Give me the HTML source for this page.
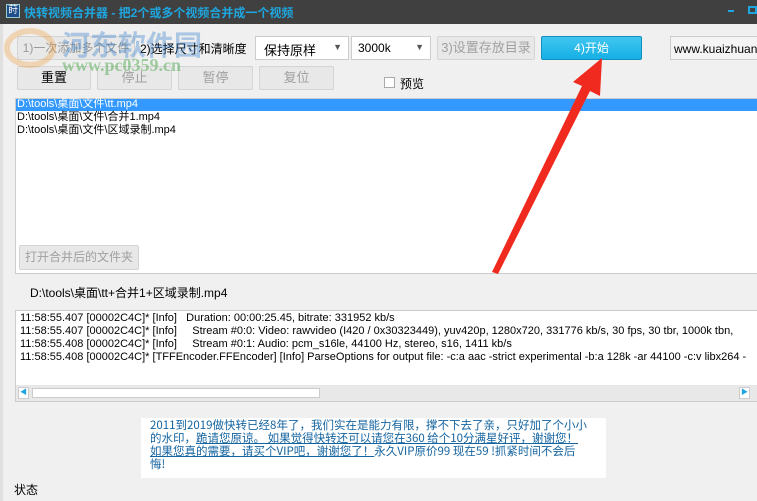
<!DOCTYPE html>
<html><head><meta charset="utf-8"><style>
*{margin:0;padding:0;box-sizing:border-box}
body{width:757px;height:501px;overflow:hidden;background:#f0f0f0;position:relative;font-family:"Liberation Sans","Noto Sans CJK SC",sans-serif;font-size:12px;color:#000}
.a{position:absolute}
.btn{position:absolute;border:1px solid #d4d4d4;background:#e8e8e8;color:#a0a0a0;font-size:13px;text-align:center;border-radius:2px}
.w{background:#fff}
</style></head><body>
<div class="a" style="left:0;top:0;width:757px;height:24px;background:#404040"></div>
<div class="a" style="left:6px;top:4px;width:14px;height:14px;background:#1e4f8a;border:1px solid #9cc;color:#fff;font-size:10px;line-height:12px;text-align:center">莳</div>
<div class="a" style="left:24px;top:4px;color:#1ea6df;font-weight:bold;font-size:12px">快转视频合并器 - 把2个或多个视频合并成一个视频</div>
<div class="a" style="left:728px;top:10px;width:6px;height:2px;background:#1ea6df"></div>
<div class="a" style="left:748px;top:6px;width:9px;height:8px;border:2px solid #1ea6df"></div>

<div class="btn" style="left:17px;top:36px;width:118px;height:24px;line-height:22px;color:#999;font-size:12px">1)一次添加多个文件</div>
<div class="a" style="left:140px;top:40px;font-size:12px">2)选择尺寸和清晰度</div>
<div class="a w" style="left:255px;top:36px;width:94px;height:24px;border:1px solid #ccc;font-size:13px;padding:3px 8px">保持原样<span style="position:absolute;right:6px;top:5px;font-size:9px;color:#555">▼</span></div>
<div class="a w" style="left:351px;top:36px;width:80px;height:24px;border:1px solid #ccc;font-size:12px;padding:4px 6px">3000k<span style="position:absolute;right:6px;top:5px;font-size:9px;color:#555">▼</span></div>
<div class="btn" style="left:437px;top:36px;width:98px;height:24px;line-height:22px">3)设置存放目录</div>
<div class="a" style="left:541px;top:36px;width:101px;height:24px;border:1px solid #1490c0;background:linear-gradient(#40c6ef,#16b0e6);color:#fff;text-align:center;line-height:22px;font-size:12px;border-radius:2px">4)开始</div>
<div class="a" style="left:670px;top:36px;width:90px;height:24px;border:1px solid #ccc;background:#f4f4f4;padding:5px 3px;font-size:12px;white-space:nowrap;overflow:hidden">www.kuaizhuan.c</div>

<div class="btn" style="left:17px;top:66px;width:74px;height:24px;line-height:22px;color:#000">重置</div>
<div class="btn" style="left:97px;top:66px;width:75px;height:24px;line-height:22px">停止</div>
<div class="btn" style="left:178px;top:66px;width:75px;height:24px;line-height:22px">暂停</div>
<div class="btn" style="left:259px;top:66px;width:75px;height:24px;line-height:22px">复位</div>
<div class="a w" style="left:384px;top:77px;width:11px;height:11px;border:1px solid #aaa"></div>
<div class="a" style="left:400px;top:75px;font-size:12px">预览</div>

<div class="a w" style="left:15px;top:98px;width:745px;height:176px;border:1px solid #ccc"></div>
<div class="a" style="left:16px;top:99px;width:741px;height:12px;background:#3399ff"></div>
<div class="a" style="left:17px;top:98px;line-height:13px;font-size:11px"><span style="color:#fff">D:\tools\桌面\文件\tt.mp4</span><br>D:\tools\桌面\文件\合并1.mp4<br>D:\tools\桌面\文件\区域录制.mp4</div>
<div class="btn" style="left:19px;top:245px;width:120px;height:25px;line-height:23px;font-size:12px">打开合并后的文件夹</div>
<div class="a" style="left:30px;top:284px;font-size:12px">D:\tools\桌面\tt+合并1+区域录制.mp4</div>

<div class="a w" style="left:15px;top:310px;width:745px;height:92px;border:1px solid #ccc"></div>
<div class="a" style="left:20px;top:312px;font-size:11px;line-height:13px;white-space:nowrap;width:735px;overflow:hidden">11:58:55.407 [00002C4C]* [Info]&nbsp;&nbsp; Duration: 00:00:25.45, bitrate: 331952 kb/s<br>11:58:55.407 [00002C4C]* [Info]&nbsp;&nbsp;&nbsp;&nbsp; Stream #0:0: Video: rawvideo (I420 / 0x30323449), yuv420p, 1280x720, 331776 kb/s, 30 fps, 30 tbr, 1000k tbn,<br>11:58:55.408 [00002C4C]* [Info]&nbsp;&nbsp;&nbsp;&nbsp; Stream #0:1: Audio: pcm_s16le, 44100 Hz, stereo, s16, 1411 kb/s<br>11:58:55.408 [00002C4C]* [TFFEncoder.FFEncoder] [Info] ParseOptions for output file: -c:a aac -strict experimental -b:a 128k -ar 44100 -c:v libx264 -</div>
<div class="a" style="left:16px;top:385px;width:741px;height:16px;background:#e8e8e8"></div>
<div class="a w" style="left:18px;top:387px;width:11px;height:12px;border:1px solid #ccc;font-size:7px;color:#1ea6df;text-align:center;line-height:10px">◀</div>
<div class="a w" style="left:32px;top:388px;width:288px;height:10px;border:1px solid #ccc"></div>
<div class="a w" style="left:739px;top:387px;width:11px;height:12px;border:1px solid #ccc;font-size:7px;color:#1ea6df;text-align:center;line-height:10px">▶</div>

<div class="a w" style="left:141px;top:418px;width:465px;height:60px"></div>
<div class="a" style="left:150px;top:419px;font-size:11.5px;line-height:13px;white-space:nowrap;color:#1464a0;font-family:'WenQuanYi Zen Hei','Noto Sans CJK SC',sans-serif">2011到2019做快转已经8年了，我们实在是能力有限，撑不下去了亲，只好加了个小小<br>的水印，<u>跪请您原谅。 如果觉得快转还可以请您在360 给个10分满星好评，谢谢您！<br>如果您真的需要，请买个VIP吧，谢谢您了！</u>永久VIP原价99 现在59 !抓紧时间不会后<br>悔!</div>
<div class="a" style="left:14px;top:481px;font-size:12px">状态</div>

<div class="a" style="left:0;top:24px;width:3px;height:477px;background:#e0e0e0"></div>

<div class="a" style="left:62px;top:24px;font-size:28px;font-weight:bold;color:rgba(40,120,200,0.35);letter-spacing:0">河东软件园</div>
<div class="a" style="left:4px;top:28px;width:52px;height:40px;border-radius:50%;border:6px solid rgba(240,150,40,0.3)"></div>
<div class="a" style="left:62px;top:55px;font-size:18px;font-weight:bold;color:rgba(60,160,60,0.45);font-family:'Liberation Serif',serif">www.pc0359.cn</div>

<svg class="a" style="left:0;top:0" width="757" height="501"><polygon points="492,272 582,86 573,82 602,58 600,96 590,91 498,274" fill="#f02a1e"/></svg>
</body></html>
